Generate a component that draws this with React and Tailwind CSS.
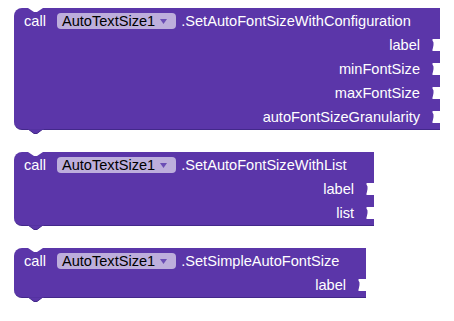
import React from "react";

const Socket = () => (
  <svg className="absolute right-0 top-1/2 -translate-y-1/2" width="8" height="12" viewBox="0 0 8 12">
    <path d="M8,0 H1 Q0,0 0.5,1.5 Q2,3 1.5,6 Q1,9 0.5,10.5 Q0,12 1,12 H8 Z" fill="#ffffff" />
  </svg>
);

const Block = ({ width, method, inputs }) => {
  return (
    <div className="relative" style={{ width }}>
      {/* top notch */}
      <svg className="absolute left-[14px] top-0 z-10" width="16" height="5" viewBox="0 0 16 5">
        <path d="M0,0 L6,4 L9,4 L15,0 Z" fill="#ffffff" />
      </svg>
      <div className="bg-[#5b36a9] rounded-l-[8px] border-b border-[#43288a] text-white text-[14.6px] leading-none font-['Liberation_Sans',Arial,sans-serif]">
        <div className="flex items-center h-[25px] pl-[10px] pt-[1px]">
          <span>call</span>
          <div className="ml-[11px] h-[16px] rounded-[4px] bg-[#bdaedc] flex items-center pl-[5px] pr-[9px] text-black">
            <span>AutoTextSize1</span>
            <svg className="ml-[5px]" width="7" height="5" viewBox="0 0 7 5">
              <path d="M0,0 H7 L3.5,5 Z" fill="#6b4db5" />
            </svg>
          </div>
          <span className="ml-[5px]">{method}</span>
        </div>
        {inputs.map((name) => (
          <div key={name} className="relative flex items-center justify-end h-[24px] pr-[20px]">
            <span>{name}</span>
            <Socket />
          </div>
        ))}
      </div>
      {/* bottom tab */}
      <svg className="absolute left-[14px] -bottom-[5px]" width="16" height="6" viewBox="0 0 16 6">
        <path d="M0,0 L6,4.5 L9,4.5 L15,0 Z" fill="#5b36a9" stroke="#43288a" strokeWidth="1" />
        <rect x="0" y="-1" width="16" height="1.5" fill="#5b36a9" />
      </svg>
    </div>
  );
};

export default function App() {
  return (
    <div className="w-[454px] h-[321px] bg-white pt-[8px] pl-[14px] flex flex-col gap-[22px]">
      <Block
        width={426}
        method=".SetAutoFontSizeWithConfiguration"
        inputs={["label", "minFontSize", "maxFontSize", "autoFontSizeGranularity"]}
      />
      <Block width={360} method=".SetAutoFontSizeWithList" inputs={["label", "list"]} />
      <Block width={352} method=".SetSimpleAutoFontSize" inputs={["label"]} />
    </div>
  );
}
